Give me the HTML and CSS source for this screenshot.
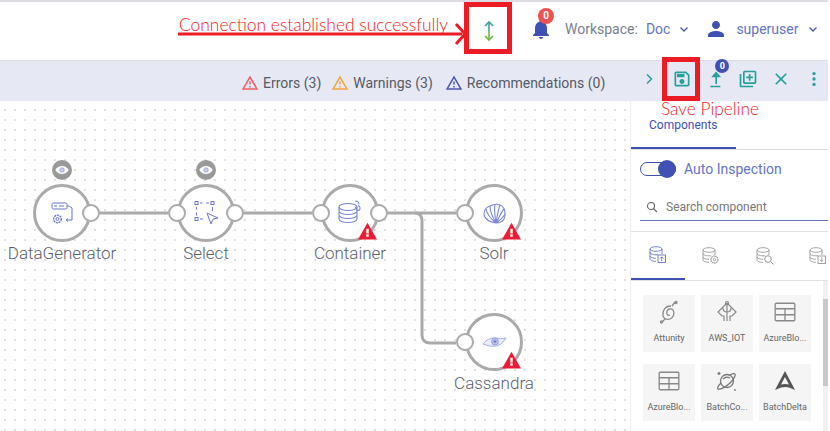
FILE: index.html
```html
<!DOCTYPE html>
<html lang="en">
<head>
<meta charset="UTF-8">
<meta name="viewport" content="width=device-width, initial-scale=1.0">
<title>Pipeline Designer</title>
<link rel="stylesheet" href="styles.css">
</head>
<body>

<svg class="icon-defs" aria-hidden="true">
    <symbol id="i-bell" viewBox="0 0 24 24"><path d="M12 22c1.1 0 2-.9 2-2h-4c0 1.1.9 2 2 2zm6-6v-5c0-3.07-1.63-5.64-4.5-6.32V4c0-.83-.67-1.5-1.5-1.5s-1.5.67-1.5 1.5v.68C7.64 5.36 6 7.92 6 11v5l-2 2v1h16v-1l-2-2z"/></symbol>
    <symbol id="i-person" viewBox="0 0 24 24"><path d="M12 12c2.21 0 4-1.79 4-4s-1.79-4-4-4-4 1.79-4 4 1.79 4 4 4zm0 2c-2.67 0-8 1.34-8 4v2h16v-2c0-2.66-5.33-4-8-4z"/></symbol>
    <symbol id="i-chev-down" viewBox="0 0 12 12"><path d="M2.5 4.500 6 8l3.500-3.500" fill="none" stroke="currentColor" stroke-width="1.300"/></symbol>
    <symbol id="i-warn-line" viewBox="0 0 24 24"><path d="M12 5.990 19.530 19H4.470L12 5.990M12 2 1 21h22L12 2zm1 14h-2v2h2v-2zm0-6h-2v4h2v-4z"/></symbol>
    <symbol id="i-warn" viewBox="0 0 24 24"><path d="M0 22 12 1l12 21H0z"/><path d="M10.500 8.500h3v6h-3zM10.500 15.500h3v3h-3z" fill="#fff"/></symbol>
    <symbol id="i-eye" viewBox="0 0 24 24"><path d="M2 12c2.200-4 5.800-6 10-6s7.800 2 10 6c-2.200 4-5.800 6-10 6s-7.800-2-10-6z" fill="#fff"/><circle cx="12" cy="12" r="3.400" fill="#c9cdea" stroke="#8d93c9" stroke-width="1"/></symbol>
    <symbol id="i-db" viewBox="0 0 18 18"><g fill="none" stroke="currentColor" stroke-width=".9"><ellipse cx="7" cy="3" rx="6" ry="2.300"/><path d="M1 3v10c0 1.300 2.700 2.300 6 2.300M1 6.500c0 1.300 2.700 2.300 6 2.300h2M1 10c0 1.300 2.700 2.300 6 2.300M13 3v5"/></g></symbol>
</svg>

<div class="page">

    <header class="topbar">
        <div class="status-icon">
            <svg width="14" height="24" viewBox="0 0 14 24" fill="none" stroke-width="1.600">
                <path d="M7 3v9" stroke="#3f9ea0"/>
                <path d="M7 12v9" stroke="#6fb83f"/>
                <path d="M3 7l4-4 4 4" stroke="#3f9ea0"/>
                <path d="M3 17l4 4 4-4" stroke="#6fb83f"/>
            </svg>
        </div>
        <div class="bell">
            <svg class="bell-icon" width="24" height="24"><use href="#i-bell"/></svg>
            <span class="bell-badge">0</span>
        </div>
        <div class="menu menu-workspace">
            <span class="menu-label">Workspace:</span>
            <span class="menu-value">Doc</span>
            <svg class="chev" width="12" height="12"><use href="#i-chev-down"/></svg>
        </div>
        <div class="menu menu-user">
            <svg class="person" width="24" height="24"><use href="#i-person"/></svg>
            <span class="menu-value">superuser</span>
            <svg class="chev" width="12" height="12"><use href="#i-chev-down"/></svg>
        </div>
    </header>

    <div class="toolbar">
        <div class="alerts">
            <span class="alert alert-error"><svg width="18" height="18"><use href="#i-warn-line"/></svg>Errors (3)</span>
            <span class="alert alert-warning"><svg width="18" height="18"><use href="#i-warn-line"/></svg>Warnings (3)</span>
            <span class="alert alert-info"><svg width="18" height="18"><use href="#i-warn-line"/></svg>Recommendations (0)</span>
        </div>
        <div class="actions">
            <svg class="act act-chev" width="10" height="12" viewBox="0 0 10 12"><path d="M3 1.500 7.500 6 3 10.500" fill="none" stroke="currentColor" stroke-width="1.500"/></svg>
            <svg class="act act-save" width="20" height="20" viewBox="0 0 24 24"><path d="M17 3H5c-1.110 0-2 .9-2 2v14c0 1.100.89 2 2 2h14c1.100 0 2-.9 2-2V7l-4-4zm2 16H5V5h11.170L19 7.830V19zm-7-7c-1.660 0-3 1.340-3 3s1.340 3 3 3 3-1.340 3-3-1.340-3-3-3zM6 6h9v4H6z"/></svg>
            <div class="act-upload">
                <svg width="20" height="20" viewBox="0 0 24 24"><path d="M4 20h12v2H4zM10 18v-8H5l6-7 6 7h-5v8z"/></svg>
                <span class="upload-badge">0</span>
            </div>
            <svg class="act act-add" width="20" height="20" viewBox="0 0 24 24"><path d="M4 6H2v14c0 1.100.9 2 2 2h14v-2H4V6zm16-4H8c-1.100 0-2 .9-2 2v12c0 1.100.9 2 2 2h12c1.100 0 2-.9 2-2V4c0-1.100-.9-2-2-2zm0 14H8V4h12v12zm-7-2h2v-3h3V9h-3V6h-2v3h-3v2h3z"/></svg>
            <svg class="act act-close" width="20" height="20" viewBox="0 0 24 24"><path d="M19 6.410 17.590 5 12 10.590 6.410 5 5 6.410 10.590 12 5 17.590 6.410 19 12 13.410 17.590 19 19 17.590 13.410 12z"/></svg>
            <svg class="act act-more" width="20" height="20" viewBox="0 0 24 24"><circle cx="12" cy="5.500" r="2"/><circle cx="12" cy="12" r="2"/><circle cx="12" cy="18.500" r="2"/></svg>
        </div>
    </div>

    <div class="workspace">
        <main class="canvas">
            <svg class="edges" width="630" height="331" fill="none" stroke="#aaa" stroke-width="3">
                <path d="M100 112H168"/>
                <path d="M244 112H312"/>
                <path d="M388 112H456"/>
                <path d="M415 112c5 0 7 3 7 8V234c0 5 3 8 8 8H456"/>
            </svg>

            <div class="node node-generator">
                <span class="peek"><svg width="16" height="16"><use href="#i-eye"/></svg></span>
                <svg class="node-icon" width="26" height="26" viewBox="0 0 26 26" fill="none" stroke="#6b77d0" stroke-width="1">
                    <rect x="3" y="3" width="15" height="6" rx="1.500"/>
                    <path d="M5 6h3M10 6h5M18 6h2l3 2v12h-6M17 20l2-1.500M17 20l2 1.500"/>
                    <circle cx="8.500" cy="19" r="3.800" stroke-dasharray="2 .8" stroke-width="1.400"/>
                    <circle cx="8.500" cy="19" r="1.500"/>
                </svg>
                <span class="port port-out"></span>
                <span class="node-label">DataGenerator</span>
            </div>

            <div class="node node-select">
                <span class="peek"><svg width="16" height="16"><use href="#i-eye"/></svg></span>
                <svg class="node-icon" width="26" height="26" viewBox="0 0 26 26" fill="none" stroke="#6b77d0" stroke-width="1">
                    <rect x="2" y="1.500" width="3" height="3"/>
                    <rect x="18" y="1.500" width="3" height="3"/>
                    <rect x="2" y="17.500" width="3" height="3"/>
                    <path d="M7 3h2.500M13 3h3M3.500 7v2.500M3.500 12.500v3M19.500 7v4M7 19h3"/>
                    <path d="M14 13l11 5-5 1-2 5z"/>
                </svg>
                <span class="port port-in"></span>
                <span class="port port-out"></span>
                <span class="node-label">Select</span>
            </div>

            <div class="node node-container">
                <svg class="node-icon" width="26" height="26" viewBox="0 0 26 26" fill="none" stroke="#7b88d4" stroke-width="1.100">
                    <ellipse cx="11" cy="7" rx="9" ry="3.500"/>
                    <path d="M2 7v12c0 2 4 3.500 9 3.500s9-1.500 9-3.500V7M2 11c0 2 4 3.500 9 3.500s9-1.500 9-3.500M2 15c0 2 4 3.500 9 3.500s9-1.500 9-3.500"/>
                    <path d="M18 1c3 0 4 1.500 4 3.500M21 5.500c2 1 3 3 1 5-2 0-4-1-3-4"/>
                </svg>
                <span class="port port-in"></span>
                <span class="port port-out"></span>
                <svg class="warn" width="21" height="19"><use href="#i-warn"/></svg>
                <span class="node-label">Container</span>
            </div>

            <div class="node node-solr">
                <svg class="node-icon" width="23" height="21" viewBox="0 0 23 21" fill="none" stroke="#7b88d4" stroke-width="1.100">
                    <path d="M13 20C7 19 2 16 1 12M13 20C8 16 4 11 3 6M13 20C10 15 7 9 7 3M13 20C12 14 11 7 12 1M13 20C14 14 15 7 17 2M13 20C16 15 18 9 21 6M13 20C16 18 20 15 22 11M13 20C17 20 20 18 21 16"/>
                    <path d="M1 12C1 7 3 4 7 3c4-2 8-2 10-1 3 1 5 4 5 9 0 2 0 4-1 5"/>
                </svg>
                <span class="port port-in"></span>
                <svg class="warn" width="21" height="19"><use href="#i-warn"/></svg>
                <span class="node-label">Solr</span>
            </div>

            <div class="node node-cassandra">
                <svg class="node-icon" width="25" height="12" viewBox="0 0 25 12" fill="none" stroke="#8e99dc" stroke-width=".8">
                    <path d="M1 8C4 4 9 1.500 14 2c3 .3 6 1 10 0-2 3-4 6-8 7.500-5 1.500-10 .5-15-1.500z" fill="#eceefa"/>
                    <circle cx="13" cy="5.500" r="3.500" fill="#bcc3ec"/>
                    <circle cx="13" cy="5.500" r="1.300" fill="#6f7bc9"/>
                </svg>
                <span class="port port-in"></span>
                <svg class="warn" width="21" height="19"><use href="#i-warn"/></svg>
                <span class="node-label">Cassandra</span>
            </div>
        </main>

        <aside class="panel">
            <div class="tabs">
                <span class="tab">Components</span>
            </div>
            <div class="inspect">
                <span class="toggle"><span class="toggle-knob"></span></span>
                <span class="inspect-label">Auto Inspection</span>
            </div>
            <div class="search-row">
                <div class="search">
                    <svg width="12" height="12" viewBox="0 0 12 12" fill="none" stroke="#666" stroke-width="1.100"><circle cx="5" cy="5" r="3.500"/><path d="M7.500 7.500 11 11"/></svg>
                    <span>Search component</span>
                </div>
            </div>
            <div class="type-tabs">
                <span class="type-tab type-active">
                    <svg width="18" height="18"><use href="#i-db"/><g fill="none" stroke="currentColor" stroke-width=".9"><rect x="9" y="9" width="7.500" height="7.500"/><path d="M12.700 15v-4M11 12.500l1.700-1.700 1.700 1.700"/></g></svg>
                </span>
                <span class="type-tab">
                    <svg width="18" height="18"><use href="#i-db"/><g fill="none" stroke="currentColor" stroke-width=".9"><circle cx="12.500" cy="12.500" r="3.500" stroke-dasharray="1.500 .6" stroke-width="1.300"/><circle cx="12.500" cy="12.500" r="1.200"/></g></svg>
                </span>
                <span class="type-tab">
                    <svg width="18" height="18"><use href="#i-db"/><g fill="none" stroke="currentColor" stroke-width="1"><circle cx="12" cy="12" r="3.300"/><path d="M14.500 14.500l3 3"/></g></svg>
                </span>
                <span class="type-tab">
                    <svg width="18" height="18"><use href="#i-db"/><g fill="none" stroke="currentColor" stroke-width=".9"><rect x="9" y="9" width="7.500" height="7.500"/><path d="M12.700 10.500v4M11 12.800l1.700 1.700 1.700-1.700"/></g></svg>
                </span>
            </div>
            <div class="list">
                <div class="cards">
                    <div class="card">
                        <svg width="24" height="24" viewBox="0 0 24 24" fill="none" stroke="#888" stroke-width="1.300"><path d="M14 6c-6 0-9 5-8 10 1 3 4 4 7 3 4-2 5-6 3-9-2-2-5-1-6 1-1 3 1 5 3 4M8 19l-3 3M15 6l3-4"/><circle cx="19" cy="2.500" r="1"/><circle cx="4.500" cy="22" r="1"/></svg>
                        <span>Attunity</span>
                    </div>
                    <div class="card">
                        <svg width="24" height="24" viewBox="0 0 24 24" fill="none" stroke="#888" stroke-width="1.200"><path d="M12 3l9 9-4 4h-2v5M12 3l-9 9 4 4h2v5M12 3v18M8 8c0 3 2 4 4 4s4-1 4-4"/><circle cx="12" cy="3" r="1.500"/></svg>
                        <span>AWS_IOT</span>
                    </div>
                    <div class="card">
                        <svg width="24" height="24" viewBox="0 0 22 22" fill="none" stroke="#888" stroke-width="1.200"><rect x="2" y="3" width="18" height="16" rx="1"/><path d="M2 8h18M2 13.500h18M11 8v11"/></svg>
                        <span>AzureBlo...</span>
                    </div>
                    <div class="card">
                        <svg width="24" height="24" viewBox="0 0 22 22" fill="none" stroke="#888" stroke-width="1.200"><rect x="2" y="3" width="18" height="16" rx="1"/><path d="M2 8h18M2 13.500h18M11 8v11"/></svg>
                        <span>AzureBlo...</span>
                    </div>
                    <div class="card">
                        <svg width="24" height="24" viewBox="0 0 24 24" fill="none" stroke="#777" stroke-width="1.300"><circle cx="12" cy="12" r="6.500"/><path d="M6 14c-3 3-4 5-3 6 2 1 8-2 12-6s6-8 5-9c-1-1-3 0-5 1M8 10c2-2 5-2 7-1"/><path d="M4 3v3M2.500 4.500h3M20 20v2"/></svg>
                        <span>BatchCo...</span>
                    </div>
                    <div class="card">
                        <svg width="24" height="24" viewBox="0 0 24 24" fill="#555"><path d="M12 2 22 21l-6-2.500c-2-.8-5-.8-8 0L2 21zm0 6-4 7.500c2.500-.7 5.500-.7 8 0z" fill-rule="evenodd"/></svg>
                        <span>BatchDelta</span>
                    </div>
                </div>
                <div class="scrollbar"><span class="scroll-thumb"></span></div>
            </div>
        </aside>
    </div>

    <!-- red callouts drawn on top of the screenshot -->
    <span class="note note-connection">Connection established successfully</span>
    <svg class="note-arrow" width="292" height="24" fill="none" stroke="#ed1c24" stroke-width="3">
        <path d="M0 12H284"/>
        <path d="M278 2l9 10-9 10"/>
    </svg>
    <span class="callout callout-status"></span>
    <span class="callout callout-save"></span>
    <span class="note note-save">Save Pipeline</span>
</div>

</body>
</html>
```

FILE: styles.css
```css
* {
    box-sizing: border-box;
}
body {
    margin: 0;
    background-color: #FFFFFF;
    font-family: Roboto, Arial, sans-serif;
    overflow: hidden;
}
.icon-defs {
    display: none;
}
.page {
    position: relative;
    width: 828px;
    height: 431px;
    display: flex;
    flex-direction: column;
    overflow: hidden;
}

/* top bar */
.topbar {
    height: 60px;
    flex: none;
    border-top: 2px solid #dcdde3;
    display: flex;
    align-items: center;
    padding-bottom: 5px;
}
.status-icon {
    margin: 4px 0 0 482px;
    width: 14px;
    height: 24px;
}
.bell {
    position: relative;
    margin-left: 33px;
    width: 24px;
    height: 24px;
    fill: #3f51b5;
}
.bell-badge {
    position: absolute;
    left: 9px;
    top: -9px;
    width: 16px;
    height: 16px;
    border-radius: 50%;
    background-color: #ef5350;
    color: #fff;
    font-size: 10px;
    font-weight: 700;
    line-height: 16px;
    text-align: center;
}
.menu {
    display: flex;
    align-items: center;
    font-size: 14px;
    white-space: nowrap;
}
.menu-workspace {
    margin-left: 12px;
}
.menu-label {
    color: #7a7f8e;
}
.menu-value {
    margin-left: 8px;
    color: #6674c4;
}
.chev {
    margin-left: 8px;
    color: #4a57ae;
}
.menu-user {
    margin-left: 14px;
}
.menu-user .person {
    fill: #3f51b5;
}
.menu-user .menu-value {
    margin-left: 8px;
}
.menu-user .chev {
    margin-left: 9px;
}

/* toolbar */
.toolbar {
    height: 41px;
    flex: none;
    background-color: #e6e8f4;
    border-top: 1px solid #d9dbea;
    display: flex;
    align-items: center;
}
.alerts {
    margin: 4px 0 0 241px;
    display: flex;
    gap: 10px;
    font-size: 14px;
    color: #555a66;
    white-space: nowrap;
}
.alert {
    display: flex;
    align-items: center;
    gap: 4px;
}
.alert-info {
    margin-left: 2px;
}
.alert-error svg {
    fill: #ef5f63;
}
.alert-warning svg {
    fill: #f5a33c;
}
.alert-info svg {
    fill: #4a57ae;
}
.actions {
    display: flex;
    align-items: center;
    margin: -4px 0 0 39px;
    color: #26a09b;
    fill: #26a09b;
}
.act-save {
    margin-left: 18px;
}
.act-upload {
    position: relative;
    width: 20px;
    height: 20px;
    margin-left: 15px;
}
.upload-badge {
    position: absolute;
    left: 8px;
    top: -10px;
    width: 14px;
    height: 14px;
    border-radius: 50%;
    background-color: #3f51b5;
    color: #fff;
    font-size: 9px;
    font-weight: 700;
    line-height: 14px;
    text-align: center;
}
.act-add {
    margin-left: 11px;
}
.act-close {
    margin-left: 13px;
}
.act-more {
    margin-left: 13px;
}

/* canvas and panel */
.workspace {
    flex: 1;
    min-height: 0;
    display: flex;
}
.canvas {
    position: relative;
    width: 630px;
    flex: none;
    background-image: radial-gradient(circle, #e0e0e0 0.9px, transparent 1.1px);
    background-size: 10px 10px;
    background-position: 0 4px;
}
.edges {
    position: absolute;
    left: 0;
    top: 0;
}
.node {
    position: absolute;
    width: 58px;
    height: 58px;
    border: 3px solid #aaa;
    border-radius: 50%;
    background-color: #fff;
    display: flex;
    align-items: center;
    justify-content: center;
}
.node-generator {
    left: 33px;
    top: 83px;
}
.node-select {
    left: 177px;
    top: 83px;
}
.node-container {
    left: 321px;
    top: 83px;
}
.node-solr {
    left: 465px;
    top: 83px;
}
.node-cassandra {
    left: 465px;
    top: 212px;
}
.port {
    position: absolute;
    top: 17px;
    width: 18px;
    height: 18px;
    border: 2.500px solid #aaa;
    border-radius: 50%;
    background-color: #fff;
}
.port-in {
    left: -12px;
}
.port-out {
    right: -12px;
}
.peek {
    position: absolute;
    left: 16px;
    top: -27px;
    width: 20px;
    height: 20px;
    border-radius: 50%;
    background-color: #999;
    display: flex;
    align-items: center;
    justify-content: center;
}
.warn {
    position: absolute;
    right: -2px;
    bottom: -2px;
    fill: #ed1c36;
}
.node-label {
    position: absolute;
    left: -50px;
    right: -50px;
    top: 56px;
    text-align: center;
    font-size: 17px;
    font-weight: 300;
    color: #5c6170;
    white-space: nowrap;
}
.node-cassandra .node-label {
    top: 57px;
}

.panel {
    width: 198px;
    flex: none;
    border-left: 1px solid #eeeeee;
    display: flex;
    flex-direction: column;
}
.tabs {
    height: 49px;
    flex: none;
    border-bottom: 1px solid #ddd;
    display: flex;
}
.tab {
    width: 105px;
    height: 48px;
    padding: 17px 0 0 18px;
    font-size: 12px;
    color: #3f51b5;
    border-bottom: 2px solid #3f51b5;
}
.inspect {
    display: flex;
    align-items: center;
    height: 39px;
    flex: none;
    padding: 0 0 2px 9px;
}
.toggle {
    position: relative;
    width: 36px;
    height: 14px;
    border: 1px solid #3f51b5;
    border-radius: 7px;
}
.toggle-knob {
    position: absolute;
    right: -1px;
    top: -3px;
    width: 18px;
    height: 18px;
    border-radius: 50%;
    background-color: #3f51b5;
}
.inspect-label {
    margin-left: 8px;
    font-size: 14px;
    color: #6674c4;
}
.search-row {
    height: 43px;
    flex: none;
    padding-left: 9px;
    border-bottom: 1px solid #e2e2e2;
}
.search {
    height: 32px;
    border-bottom: 1px solid #6674c4;
    display: flex;
    align-items: center;
    gap: 8px;
    padding: 5px 0 0 6px;
    font-size: 12px;
    color: #777;
}
.type-tabs {
    height: 49px;
    flex: none;
    display: flex;
    border-bottom: 1px solid #e2e2e2;
}
.type-tab {
    width: 53.500px;
    height: 48px;
    flex: none;
    display: flex;
    align-items: center;
    justify-content: center;
    color: #999;
}
.type-active {
    color: #6674c4;
    border-bottom: 2px solid #3f51b5;
}
.list {
    flex: 1;
    min-height: 0;
    display: flex;
    justify-content: space-between;
}
.cards {
    width: 168px;
    margin: 14px 0 0 12px;
    display: grid;
    grid-template-columns: 52px 52px 52px;
    grid-auto-rows: 57px;
    column-gap: 6px;
    row-gap: 12px;
}
.card {
    background-color: #f5f5f5;
    display: flex;
    flex-direction: column;
    align-items: center;
    padding-top: 5px;
    gap: 9px;
    font-size: 9px;
    color: #666;
    white-space: nowrap;
}
.scrollbar {
    width: 5px;
    background-color: #f1f1f1;
    padding-top: 18px;
}
.scroll-thumb {
    display: block;
    height: 87px;
    background-color: #c8c8c8;
}

/* callouts */
.note {
    position: absolute;
    font-family: Lato, sans-serif;
    font-weight: 300;
    color: #ed1c24;
    white-space: nowrap;
}
.note-connection {
    left: 179px;
    top: 14px;
    font-size: 17.400px;
}
.note-save {
    left: 661px;
    top: 98px;
    font-size: 17.300px;
}
.note-arrow {
    position: absolute;
    left: 178px;
    top: 22px;
}
.callout {
    position: absolute;
    border: 5px solid #ed1c24;
}
.callout-status {
    left: 464px;
    top: 2px;
    width: 48px;
    height: 52px;
}
.callout-save {
    left: 662px;
    top: 57px;
    width: 38px;
    height: 44px;
}
```
